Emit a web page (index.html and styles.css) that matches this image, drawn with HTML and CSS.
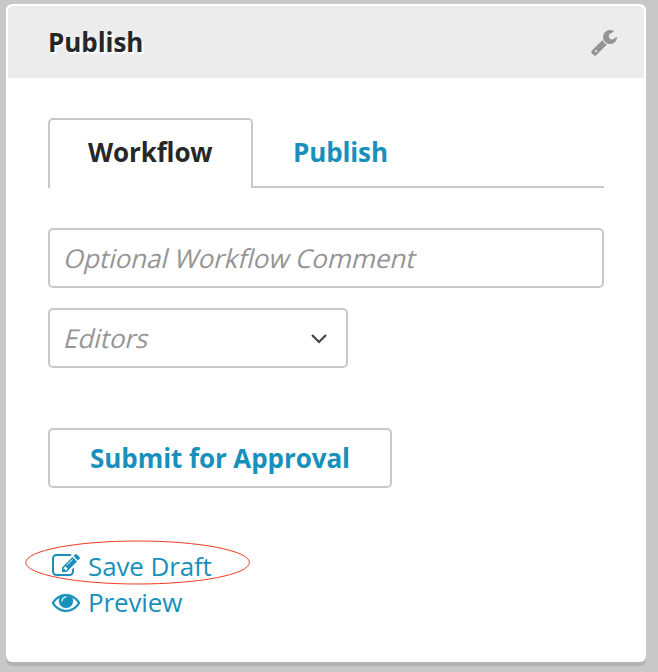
FILE: index.html
```html
<!DOCTYPE html>
<html lang="en">
<head>
<meta charset="utf-8">
<title>Publish</title>
<link rel="stylesheet" href="styles.css">
</head>
<body>
<section class="panel">
  <header class="panel-header">
    <h2 class="panel-title">Publish</h2>
    <svg class="icon icon-wrench" viewBox="0 0 1792 1792"><path d="M448 1472q0-26-19-45t-45-19-45 19-19 45 19 45 45 19 45-19 19-45zm644-420l-682 682q-37 37-90 37-52 0-91-37l-106-108q-38-36-38-90 0-53 38-91l681-681q39 98 114.5 173.5t173.5 114.5zm634-435q0 39-23 106-47 134-164.5 217.5t-258.5 83.5q-185 0-316.5-131.5t-131.5-316.5 131.5-316.5 316.5-131.5q58 0 121.5 16.5t107.5 46.5q16 11 16 28t-16 28l-293 169v224l193 107q5-3 79-48.5t135.5-81 70.5-35.5q15 0 23.5 10t8.5 25z"/></svg>
  </header>
  <div class="panel-body">
    <nav class="tabs">
      <a class="tab tab-active">Workflow</a>
      <a class="tab">Publish</a>
    </nav>
    <div class="field comment"><span class="placeholder">Optional Workflow Comment</span></div>
    <div class="field select">
      <span class="placeholder">Editors</span>
      <svg class="chevron" viewBox="0 0 18 12"><path d="M2 3l7 7 7-7"/></svg>
    </div>
    <button class="submit" type="button">Submit for Approval</button>
    <div class="links">
      <a class="link save">
        <svg class="icon" viewBox="0 0 1792 1792"><path d="M888 1184l116-116-152-152-116 116v56h96v96h56zm440-720q-16-16-33 1l-350 350q-17 17-1 33t33-1l350-350q17-17 1-33zm80 594v190q0 119-84.5 203.5t-203.5 84.5h-832q-119 0-203.5-84.5t-84.5-203.5v-832q0-119 84.5-203.5t203.5-84.5h832q63 0 117 25 15 7 18 23 3 17-9 29l-49 49q-14 14-32 8-23-6-45-6h-832q-66 0-113 47t-47 113v832q0 66 47 113t113 47h832q66 0 113-47t47-113v-126q0-13 9-22l64-64q15-15 35-7t20 29zm-96-738l288 288-672 672h-288v-288zm444 132l-92 92-288-288 92-92q28-28 68-28t68 28l152 152q28 28 28 68t-28 68z"/></svg>
        <span>Save Draft</span>
        <svg class="highlight" viewBox="0 0 226 46"><ellipse cx="112.6" cy="22.5" rx="111.8" ry="21.5"/></svg>
      </a>
      <a class="link">
        <svg class="icon icon-eye" viewBox="0 0 1792 1792"><path d="M1664 960q-152-236-381-353 61 104 61 225 0 185-131.5 316.5t-316.5 131.5-316.5-131.5-131.5-316.5q0-121 61-225-229 117-381 353 133 205 333.5 326.5t434.5 121.5 434.5-121.5 333.5-326.5zm-720-384q0-20-14-34t-34-14q-125 0-214.5 89.5t-89.5 214.5q0 20 14 34t34 14 34-14 14-34q0-86 61-147t147-61q20 0 34-14t14-34zm848 384q0 34-20 69-140 230-376.5 368.5t-499.5 138.5-499.5-139-376.5-368q-20-35-20-69t20-69q140-229 376.5-368t499.5-139 499.5 139 376.5 368q20 35 20 69z"/></svg>
        <span>Preview</span>
      </a>
    </div>
  </div>
</section>
</body>
</html>
```
FILE: styles.css
```css
* {
  box-sizing: border-box;
}

body {
  margin: 0;
  height: 672px;
  padding: 4px 12px 10px 6px;
  overflow: hidden;
  background: #c8c8c8;
  font-family: "Open Sans", sans-serif;
  font-size: 26px;
  line-height: 36px;
  letter-spacing: -0.13px;
  color: #262727;
}

.panel {
  height: 658px;
  padding: 2px;
  border-radius: 6px;
  background: #fff;
  box-shadow: 0 4px 0 #b3b3b3;
}

.panel-header {
  display: flex;
  align-items: center;
  justify-content: space-between;
  height: 72px;
  padding: 0 26px 0 40px;
  border-radius: 5px 5px 0 0;
  background: #ececec;
}

.panel-title {
  margin: 0;
  font-size: 26px;
  font-weight: 700;
  letter-spacing: -0.05px;
  text-shadow: 2px 2px 1px #fff;
}

.icon {
  flex: none;
  width: 28px;
  height: 28px;
  fill: currentColor;
}

.icon-eye {
  stroke: currentColor;
  stroke-width: 20;
}

.icon-wrench {
  color: #949494;
}

.panel-body {
  display: flex;
  flex-direction: column;
  align-items: flex-start;
  padding: 40px 40px 0;
}

.tabs {
  display: flex;
  width: 100%;
  height: 70px;
  margin-bottom: 40px;
}

.tab {
  flex: 1;
  padding: 16px 0 0 40px;
  border-bottom: 2px solid #c8c8c8;
  font-weight: 700;
  color: #1790bb;
}

.tab-active {
  flex: none;
  width: 205px;
  padding: 14px 0 0 38px;
  border: 2px solid #c8c8c8;
  border-bottom: 0;
  border-radius: 5px 5px 0 0;
  color: #262727;
}

.field {
  display: flex;
  align-items: center;
  height: 60px;
  padding: 0 14px 0 15px;
  border: 2px solid #c8c8c8;
  border-radius: 5px;
  color: #959595;
}

.placeholder {
  display: block;
  letter-spacing: -0.06px;
  transform: skewX(-14deg);
}

.comment {
  width: 100%;
  margin-bottom: 20px;
}

.select {
  justify-content: space-between;
  width: 300px;
  padding-right: 18px;
  margin-bottom: 60px;
}

.chevron {
  width: 18px;
  height: 12px;
  fill: none;
  stroke: #444;
  stroke-width: 2.2;
}

.submit {
  width: 344px;
  height: 60px;
  padding: 0;
  border: 2px solid #c8c8c8;
  border-radius: 5px;
  background: #fff;
  font: 700 26px/36px "Open Sans", sans-serif;
  letter-spacing: -0.07px;
  color: #1790bb;
}

.links {
  margin: 60px 0 0 4px;
}

.link {
  position: relative;
  display: flex;
  align-items: center;
  gap: 8px;
  height: 36px;
  color: #1790bb;
}

.highlight {
  position: absolute;
  top: -8px;
  left: -27px;
  width: 226px;
  height: 46px;
  fill: none;
  stroke: #f23a20;
  stroke-width: 1;
}
```
